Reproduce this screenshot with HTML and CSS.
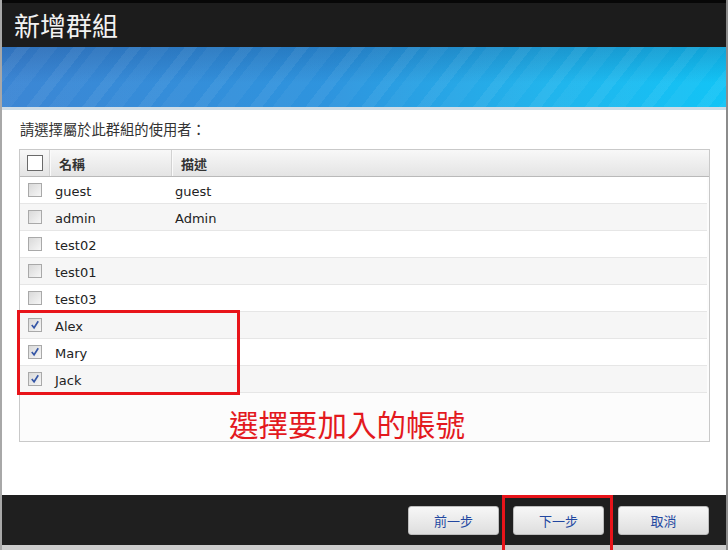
FILE: index.html
```html
<!DOCTYPE html>
<html lang="zh-Hant">
<head>
    <meta charset="UTF-8">
    <title>新增群組</title>
    <link rel="stylesheet" href="styles.css">
</head>
<body>
<div class="dialog">
    <div class="titlebar">
        <h1 class="title">新增群組</h1>
    </div>
    <div class="banner"></div>

    <div class="content">
        <p class="prompt">請選擇屬於此群組的使用者：</p>

        <div class="grid">
            <div class="grid-head">
                <div class="col-check"><span class="box-head"></span></div>
                <div class="col-name">名稱</div>
                <div class="col-desc">描述</div>
            </div>
            <div class="row">
                <div class="col-check"><span class="box"></span></div>
                <div class="col-name">guest</div>
                <div class="col-desc">guest</div>
            </div>
            <div class="row alt">
                <div class="col-check"><span class="box"></span></div>
                <div class="col-name">admin</div>
                <div class="col-desc">Admin</div>
            </div>
            <div class="row">
                <div class="col-check"><span class="box"></span></div>
                <div class="col-name">test02</div>
                <div class="col-desc"></div>
            </div>
            <div class="row alt">
                <div class="col-check"><span class="box"></span></div>
                <div class="col-name">test01</div>
                <div class="col-desc"></div>
            </div>
            <div class="row">
                <div class="col-check"><span class="box"></span></div>
                <div class="col-name">test03</div>
                <div class="col-desc"></div>
            </div>
            <div class="row alt">
                <div class="col-check"><span class="box checked"><svg viewBox="0 0 13 13"><path d="M3 6.5 L5.5 9.5 L10 2.5" /></svg></span></div>
                <div class="col-name">Alex</div>
                <div class="col-desc"></div>
            </div>
            <div class="row">
                <div class="col-check"><span class="box checked"><svg viewBox="0 0 13 13"><path d="M3 6.5 L5.5 9.5 L10 2.5" /></svg></span></div>
                <div class="col-name">Mary</div>
                <div class="col-desc"></div>
            </div>
            <div class="row alt">
                <div class="col-check"><span class="box checked"><svg viewBox="0 0 13 13"><path d="M3 6.5 L5.5 9.5 L10 2.5" /></svg></span></div>
                <div class="col-name">Jack</div>
                <div class="col-desc"></div>
            </div>

            <!-- annotations drawn over the list -->
            <div class="mark-rows"></div>
            <div class="note">選擇要加入的帳號</div>
        </div>
    </div>

    <div class="footer">
        <button class="btn">前一步</button>
        <button class="btn">下一步</button>
        <button class="btn">取消</button>
        <div class="mark-btn"></div>
    </div>
</div>
</body>
</html>
```

FILE: styles.css
```css
body {
    margin: 0;
    background: #ffffff;
    font-family: "DejaVu Sans", "Noto Sans CJK TC", sans-serif;
}

.dialog {
    width: 728px;
    height: 550px;
    box-sizing: border-box;
    border-left: 2px solid #a8a8a8;
    border-right: 2px solid #8c8c8c;
    display: flex;
    flex-direction: column;
    background: #ffffff;
}

.titlebar {
    height: 44px;
    border-top: 3px solid #070707;
    background: #1c1c1c;
    display: flex;
    align-items: center;
    padding-left: 12px;
}

.title {
    margin: 0;
    font-family: "Noto Sans CJK TC", sans-serif;
    font-weight: normal;
    font-size: 26px;
    color: #f2f2f2;
    line-height: 30px;
}

.banner {
    height: 60px;
    border-bottom: 3px solid #cfdde7;
    background:
        repeating-linear-gradient(128deg, rgba(255,255,255,0) 0 12px, rgba(255,255,255,0.06) 12px 22px, rgba(255,255,255,0) 22px 30px, rgba(255,255,255,0.04) 30px 44px),
        linear-gradient(to bottom, rgba(10,40,100,0.22), rgba(0,0,0,0) 60%),
        linear-gradient(to right, #3c86d4, #2e94de 45%, #22b4ec 75%, #12c4f6);
}

.content {
    flex: 1;
    padding: 10px 16px 0 17px;
}

.prompt {
    margin: 0 0 9px 1px;
    font-size: 14.3px;
    line-height: 20px;
    color: #333;
}

.grid {
    position: relative;
    height: 293px;
    box-sizing: border-box;
    border: 1px solid #c9c9c9;
    background: #fcfcfc;
}

.grid-head {
    display: flex;
    height: 26px;
    border-bottom: 1px solid #b9b9b9;
    background: linear-gradient(to bottom, #f8f8f8, #e4e4e4);
    font-weight: bold;
    font-size: 13px;
    color: #333;
}

.grid-head .col-name,
.grid-head .col-desc {
    padding-left: 9px;
}

.grid-head .col-check,
.grid-head .col-name {
    border-right: 1px solid #d2d2d2;
    box-shadow: 1px 0 0 #fafafa;
}

.row {
    display: flex;
    height: 26px;
    border-bottom: 1px solid #e6e6e6;
    margin-right: 2px;
    font-size: 13px;
    color: #222;
    background: #ffffff;
}

.row.alt {
    background: #f6f6f6;
}

.col-check {
    width: 30px;
    box-sizing: border-box;
    display: flex;
    align-items: center;
    padding-left: 7px;
}

.col-name {
    width: 122px;
    box-sizing: border-box;
    display: flex;
    align-items: center;
    padding-left: 5px;
    padding-top: 2px;
}

.col-desc {
    flex: 1;
    display: flex;
    align-items: center;
    padding-left: 3px;
    padding-top: 2px;
}

.grid-head .col-name,
.grid-head .col-desc {
    padding-top: 0;
}

.box-head {
    width: 14px;
    height: 14px;
    border: 1px solid #6a6a6a;
    background: #ffffff;
}

.box {
    width: 12px;
    height: 12px;
    margin-left: 1px;
    border: 1px solid #a9a9a9;
    background: linear-gradient(135deg, #d9d9d9, #f6f6f6);
    display: flex;
}

.box svg {
    width: 12px;
    height: 12px;
}

.box path {
    fill: none;
    stroke: #3556a6;
    stroke-width: 1.8;
}

.mark-rows {
    position: absolute;
    left: -3px;
    top: 160px;
    width: 217px;
    height: 79px;
    border: 3px solid #e8141a;
}

.note {
    position: absolute;
    left: 209px;
    top: 258px;
    font-family: "Noto Sans CJK TC", sans-serif;
    font-size: 29.5px;
    line-height: 30px;
    color: #e3191e;
}

.footer {
    position: relative;
    height: 55px;
    box-sizing: border-box;
    border-bottom: 5px solid #cdcdcd;
    background: #1f1f1f;
    display: flex;
    justify-content: flex-end;
    align-items: flex-start;
    gap: 14px;
    padding: 11px 17px 0 0;
}

.btn {
    width: 91px;
    height: 29px;
    border: 1px solid #bdbdbd;
    border-radius: 3px;
    background: linear-gradient(to bottom, #f7f7f7, #dedede);
    font-family: "Noto Sans CJK TC", sans-serif;
    font-size: 13px;
    color: #2247a0;
    padding: 0;
}

.mark-btn {
    position: absolute;
    left: 500px;
    top: 0;
    width: 105px;
    height: 52px;
    border: 3px solid #e8141a;
    border-bottom: none;
}
```
